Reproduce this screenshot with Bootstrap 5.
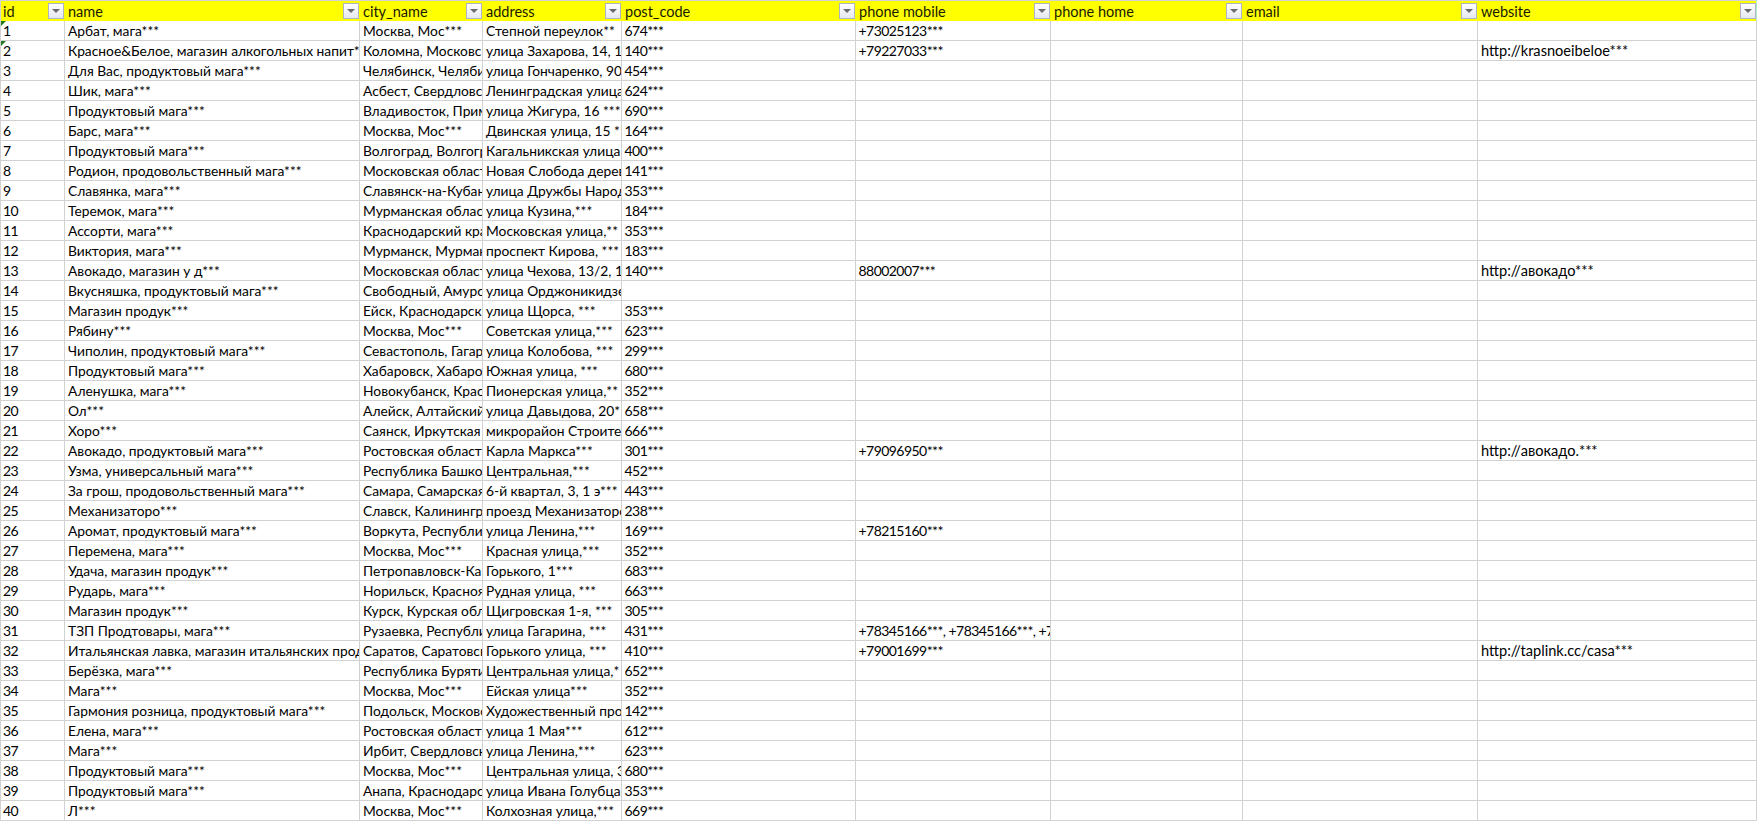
<!doctype html>
<html lang="ru"><head><meta charset="utf-8"><title>Sheet</title>
<link href="https://cdn.jsdelivr.net/npm/bootstrap@5.3.0/dist/css/bootstrap.min.css" rel="stylesheet">
<style>
body{margin:0;background:#fff;overflow:hidden}
.sheet{table-layout:fixed;width:1757px;border-collapse:separate;border-spacing:0;font:13.8px/19px Lato,"Noto Sans",sans-serif;color:#000;--bs-table-color:#000}
.cw1{width:65px}.cw2{width:295px}.cw3{width:123px}.cw4{width:139px}.cw5{width:234px}.cw6{width:195px}.cw7{width:192px}.cw8{width:235px}.cw9{width:279px}
.sheet>:not(caption)>*>*{height:20px;padding:0 0 0 3px;border:0 solid #d2d2d2;border-width:0 1px 1px 0;overflow:hidden;white-space:nowrap;vertical-align:top;box-shadow:none;line-height:19px}
.sheet>:not(caption)>*>*:first-child{border-left-width:1px;padding-left:2px}
.sheet>thead>tr>th{height:21px;padding-top:1px;border-top-width:1px;border-bottom-width:0;border-right-width:0;background:#ff0;font-size:14.5px;font-weight:400;color:#1a1a00}
.sheet>thead>tr>th:last-child{border-right:1px solid #b5ecc9}
.sheet>tbody>tr>.fig{font-size:14px;letter-spacing:-.55px;padding-left:2.5px}
.sheet>tbody>tr>.fig:first-child{padding-left:2px}
.sheet>tbody>tr>.lat{font-size:14.6px}
.head-cell{height:19px}
.filter-box{flex:none;width:16px;height:16px;margin:1px 1px 0 0;border:1px solid #adb4c6;background:linear-gradient(#fff,#e6e8ee)}
th:last-child .filter-box{margin-right:0}
.filter-box svg{display:block;margin:5px 0 0 3px}
.flag{position:absolute;left:0;top:0;width:5px;height:5px;display:block}
</style></head>
<body>
<table class="table mb-0 sheet">
<colgroup><col class="cw1"><col class="cw2"><col class="cw3"><col class="cw4"><col class="cw5"><col class="cw6"><col class="cw7"><col class="cw8"><col class="cw9"></colgroup>
<thead><tr>
<th><div class="head-cell d-flex justify-content-between"><span>id</span><span class="filter-box"><svg width="8" height="4" viewBox="0 0 8 4"><path d="M0 0h8L4 4z" fill="#6b6b6b"/></svg></span></div></th>
<th><div class="head-cell d-flex justify-content-between"><span>name</span><span class="filter-box"><svg width="8" height="4" viewBox="0 0 8 4"><path d="M0 0h8L4 4z" fill="#6b6b6b"/></svg></span></div></th>
<th><div class="head-cell d-flex justify-content-between"><span>city_name</span><span class="filter-box"><svg width="8" height="4" viewBox="0 0 8 4"><path d="M0 0h8L4 4z" fill="#6b6b6b"/></svg></span></div></th>
<th><div class="head-cell d-flex justify-content-between"><span>address</span><span class="filter-box"><svg width="8" height="4" viewBox="0 0 8 4"><path d="M0 0h8L4 4z" fill="#6b6b6b"/></svg></span></div></th>
<th><div class="head-cell d-flex justify-content-between"><span>post_code</span><span class="filter-box"><svg width="8" height="4" viewBox="0 0 8 4"><path d="M0 0h8L4 4z" fill="#6b6b6b"/></svg></span></div></th>
<th><div class="head-cell d-flex justify-content-between"><span>phone mobile</span><span class="filter-box"><svg width="8" height="4" viewBox="0 0 8 4"><path d="M0 0h8L4 4z" fill="#6b6b6b"/></svg></span></div></th>
<th><div class="head-cell d-flex justify-content-between"><span>phone home</span><span class="filter-box"><svg width="8" height="4" viewBox="0 0 8 4"><path d="M0 0h8L4 4z" fill="#6b6b6b"/></svg></span></div></th>
<th><div class="head-cell d-flex justify-content-between"><span>email</span><span class="filter-box"><svg width="8" height="4" viewBox="0 0 8 4"><path d="M0 0h8L4 4z" fill="#6b6b6b"/></svg></span></div></th>
<th><div class="head-cell d-flex justify-content-between"><span>website</span><span class="filter-box"><svg width="8" height="4" viewBox="0 0 8 4"><path d="M0 0h8L4 4z" fill="#6b6b6b"/></svg></span></div></th>
</tr></thead>
<tbody>
<tr><td class="fig position-relative"><svg class="flag" viewBox="0 0 5 5"><path d="M0 0h5L0 5z" fill="#1f7a1f"/></svg>1</td><td>Арбат, мага***</td><td>Москва, Мос***</td><td>Степной переулок**</td><td class="fig">674***</td><td class="fig">+73025123***</td><td></td><td></td><td></td></tr>
<tr><td class="fig position-relative"><svg class="flag" viewBox="0 0 5 5"><path d="M0 0h5L0 5z" fill="#1f7a1f"/></svg>2</td><td>Красное&amp;Белое, магазин алкогольных напит*</td><td>Коломна, Московс</td><td>улица Захарова, 14, 1</td><td class="fig">140***</td><td class="fig">+79227033***</td><td></td><td></td><td class="lat">http://krasnoeibeloe***</td></tr>
<tr><td class="fig">3</td><td>Для Вас, продуктовый мага***</td><td>Челябинск, Челяби</td><td>улица Гончаренко, 90</td><td class="fig">454***</td><td></td><td></td><td></td><td></td></tr>
<tr><td class="fig">4</td><td>Шик, мага***</td><td>Асбест, Свердловс</td><td>Ленинградская улица</td><td class="fig">624***</td><td></td><td></td><td></td><td></td></tr>
<tr><td class="fig">5</td><td>Продуктовый мага***</td><td>Владивосток, Прим</td><td>улица Жигура, 16 ***</td><td class="fig">690***</td><td></td><td></td><td></td><td></td></tr>
<tr><td class="fig">6</td><td>Барс, мага***</td><td>Москва, Мос***</td><td>Двинская улица, 15 **</td><td class="fig">164***</td><td></td><td></td><td></td><td></td></tr>
<tr><td class="fig">7</td><td>Продуктовый мага***</td><td>Волгоград, Волгогр</td><td>Кагальникская улица,</td><td class="fig">400***</td><td></td><td></td><td></td><td></td></tr>
<tr><td class="fig">8</td><td>Родион, продовольственный мага***</td><td>Московская област</td><td>Новая Слобода дерев</td><td class="fig">141***</td><td></td><td></td><td></td><td></td></tr>
<tr><td class="fig">9</td><td>Славянка, мага***</td><td>Славянск-на-Кубан</td><td>улица Дружбы Народ</td><td class="fig">353***</td><td></td><td></td><td></td><td></td></tr>
<tr><td class="fig">10</td><td>Теремок, мага***</td><td>Мурманская облас</td><td>улица Кузина,***</td><td class="fig">184***</td><td></td><td></td><td></td><td></td></tr>
<tr><td class="fig">11</td><td>Ассорти, мага***</td><td>Краснодарский кра</td><td>Московская улица,**</td><td class="fig">353***</td><td></td><td></td><td></td><td></td></tr>
<tr><td class="fig">12</td><td>Виктория, мага***</td><td>Мурманск, Мурман</td><td>проспект Кирова, ***</td><td class="fig">183***</td><td></td><td></td><td></td><td></td></tr>
<tr><td class="fig">13</td><td>Авокадо, магазин у д***</td><td>Московская област</td><td>улица Чехова, 13/2, 1</td><td class="fig">140***</td><td class="fig">88002007***</td><td></td><td></td><td class="lat">http://авокадо***</td></tr>
<tr><td class="fig">14</td><td>Вкусняшка, продуктовый мага***</td><td>Свободный, Амурс</td><td>улица Орджоникидзе</td><td></td><td></td><td></td><td></td><td></td></tr>
<tr><td class="fig">15</td><td>Магазин продук***</td><td>Ейск, Краснодарски</td><td>улица Щорса, ***</td><td class="fig">353***</td><td></td><td></td><td></td><td></td></tr>
<tr><td class="fig">16</td><td>Рябину***</td><td>Москва, Мос***</td><td>Советская улица,***</td><td class="fig">623***</td><td></td><td></td><td></td><td></td></tr>
<tr><td class="fig">17</td><td>Чиполин, продуктовый мага***</td><td>Севастополь, Гагар</td><td>улица Колобова, ***</td><td class="fig">299***</td><td></td><td></td><td></td><td></td></tr>
<tr><td class="fig">18</td><td>Продуктовый мага***</td><td>Хабаровск, Хабаро</td><td>Южная улица, ***</td><td class="fig">680***</td><td></td><td></td><td></td><td></td></tr>
<tr><td class="fig">19</td><td>Аленушка, мага***</td><td>Новокубанск, Крас</td><td>Пионерская улица,**</td><td class="fig">352***</td><td></td><td></td><td></td><td></td></tr>
<tr><td class="fig">20</td><td>Ол***</td><td>Алейск, Алтайский</td><td>улица Давыдова, 20**</td><td class="fig">658***</td><td></td><td></td><td></td><td></td></tr>
<tr><td class="fig">21</td><td>Хоро***</td><td>Саянск, Иркутская</td><td>микрорайон Строите</td><td class="fig">666***</td><td></td><td></td><td></td><td></td></tr>
<tr><td class="fig">22</td><td>Авокадо, продуктовый мага***</td><td>Ростовская област</td><td>Карла Маркса***</td><td class="fig">301***</td><td class="fig">+79096950***</td><td></td><td></td><td class="lat">http://авокадо.***</td></tr>
<tr><td class="fig">23</td><td>Узма, универсальный мага***</td><td>Республика Башко</td><td>Центральная,***</td><td class="fig">452***</td><td></td><td></td><td></td><td></td></tr>
<tr><td class="fig">24</td><td>За грош, продовольственный мага***</td><td>Самара, Самарская</td><td>6-й квартал, 3, 1 э***</td><td class="fig">443***</td><td></td><td></td><td></td><td></td></tr>
<tr><td class="fig">25</td><td>Механизаторо***</td><td>Славск, Калинингра</td><td>проезд Механизаторо</td><td class="fig">238***</td><td></td><td></td><td></td><td></td></tr>
<tr><td class="fig">26</td><td>Аромат, продуктовый мага***</td><td>Воркута, Республи</td><td>улица Ленина,***</td><td class="fig">169***</td><td class="fig">+78215160***</td><td></td><td></td><td></td></tr>
<tr><td class="fig">27</td><td>Перемена, мага***</td><td>Москва, Мос***</td><td>Красная улица,***</td><td class="fig">352***</td><td></td><td></td><td></td><td></td></tr>
<tr><td class="fig">28</td><td>Удача, магазин продук***</td><td>Петропавловск-Кам</td><td>Горького, 1***</td><td class="fig">683***</td><td></td><td></td><td></td><td></td></tr>
<tr><td class="fig">29</td><td>Рударь, мага***</td><td>Норильск, Красноя</td><td>Рудная улица, ***</td><td class="fig">663***</td><td></td><td></td><td></td><td></td></tr>
<tr><td class="fig">30</td><td>Магазин продук***</td><td>Курск, Курская обл</td><td>Щигровская 1-я, ***</td><td class="fig">305***</td><td></td><td></td><td></td><td></td></tr>
<tr><td class="fig">31</td><td>ТЗП Продтовары, мага***</td><td>Рузаевка, Республи</td><td>улица Гагарина, ***</td><td class="fig">431***</td><td class="fig">+78345166***, +78345166***, +7</td><td></td><td></td><td></td></tr>
<tr><td class="fig">32</td><td>Итальянская лавка, магазин итальянских прод</td><td>Саратов, Саратовск</td><td>Горького улица, ***</td><td class="fig">410***</td><td class="fig">+79001699***</td><td></td><td></td><td class="lat">http://taplink.cc/casa***</td></tr>
<tr><td class="fig">33</td><td>Берёзка, мага***</td><td>Республика Буряти</td><td>Центральная улица,*</td><td class="fig">652***</td><td></td><td></td><td></td><td></td></tr>
<tr><td class="fig">34</td><td>Мага***</td><td>Москва, Мос***</td><td>Ейская улица***</td><td class="fig">352***</td><td></td><td></td><td></td><td></td></tr>
<tr><td class="fig">35</td><td>Гармония розница, продуктовый мага***</td><td>Подольск, Московс</td><td>Художественный про</td><td class="fig">142***</td><td></td><td></td><td></td><td></td></tr>
<tr><td class="fig">36</td><td>Елена, мага***</td><td>Ростовская област</td><td>улица 1 Мая***</td><td class="fig">612***</td><td></td><td></td><td></td><td></td></tr>
<tr><td class="fig">37</td><td>Мага***</td><td>Ирбит, Свердловск</td><td>улица Ленина,***</td><td class="fig">623***</td><td></td><td></td><td></td><td></td></tr>
<tr><td class="fig">38</td><td>Продуктовый мага***</td><td>Москва, Мос***</td><td>Центральная улица, 3</td><td class="fig">680***</td><td></td><td></td><td></td><td></td></tr>
<tr><td class="fig">39</td><td>Продуктовый мага***</td><td>Анапа, Краснодарс</td><td>улица Ивана Голубца,</td><td class="fig">353***</td><td></td><td></td><td></td><td></td></tr>
<tr><td class="fig">40</td><td>Л***</td><td>Москва, Мос***</td><td>Колхозная улица,***</td><td class="fig">669***</td><td></td><td></td><td></td><td></td></tr>
</tbody></table>
<script src="https://cdn.jsdelivr.net/npm/bootstrap@5.3.0/dist/js/bootstrap.bundle.min.js"></script>
</body></html>
